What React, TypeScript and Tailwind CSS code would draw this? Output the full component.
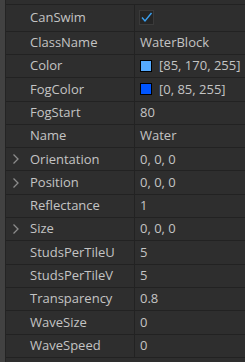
import React from "react";

type Row = { name: string; value: string; expand?: boolean; kind?: "check" | "color"; color?: string };

const rows: Row[] = [
  { name: "CanSwim", value: "", kind: "check" },
  { name: "ClassName", value: "WaterBlock" },
  { name: "Color", value: "[85, 170, 255]", kind: "color", color: "rgb(85,170,255)" },
  { name: "FogColor", value: "[0, 85, 255]", kind: "color", color: "rgb(0,85,255)" },
  { name: "FogStart", value: "80" },
  { name: "Name", value: "Water" },
  { name: "Orientation", value: "0, 0, 0", expand: true },
  { name: "Position", value: "0, 0, 0", expand: true },
  { name: "Reflectance", value: "1" },
  { name: "Size", value: "0, 0, 0", expand: true },
  { name: "StudsPerTileU", value: "5" },
  { name: "StudsPerTileV", value: "5" },
  { name: "Transparency", value: "0.8" },
  { name: "WaveSize", value: "0" },
  { name: "WaveSpeed", value: "0" },
];

function Chevron() {
  return (
    <svg width="8" height="12" viewBox="0 0 8 12" className="text-[#8c8c8c]">
      <path d="M1.5 1.5 L6 6 L1.5 10.5" fill="none" stroke="currentColor" strokeWidth="1.3" />
    </svg>
  );
}

export default function App() {
  return (
    <div
      className="w-[245px] h-[362px] flex bg-[#2e2e2e] overflow-hidden text-[13px] text-[#c4c4c4]"
      style={{ fontFamily: '"Open Sans", "Noto Sans", sans-serif' }}
    >
      <div className="w-[6px] h-full bg-[#424242] border-r border-[#242424]" />
      <div className="flex-1 flex flex-col">
        <div className="h-[5px] border-b border-[#222222]" />
        {rows.map((r, i) => (
          <div
            key={r.name}
            className={`flex border-b border-[#222222] ${i === 0 ? "h-[26.7px]" : "h-[23.3px]"}`}
          >
            <div className="w-[129px] flex items-center border-r border-[#222222]">
              <div className="w-[24px] flex items-center pl-[6px]">
                {r.expand ? <Chevron /> : null}
              </div>
              <span>{r.name}</span>
            </div>
            <div className="flex-1 flex items-center pl-[4px]">
              {r.kind === "check" ? (
                <div className="w-[15px] h-[15px] bg-[#252525] border border-[#3a3a3a] flex items-center justify-center">
                  <svg width="13" height="13" viewBox="0 0 13 13">
                    <path d="M2 6.5 L5 10 L11.5 2" fill="none" stroke="#3aa0f0" strokeWidth="1.4" />
                  </svg>
                </div>
              ) : r.kind === "color" ? (
                <div className="flex items-center gap-[7px] pl-[1px]">
                  <div className="w-[12px] h-[12px] border border-black" style={{ background: r.color }} />
                  <span>{r.value}</span>
                </div>
              ) : (
                <span className="pl-[1px]">{r.value}</span>
              )}
            </div>
          </div>
        ))}
        <div className="flex-1" />
      </div>
    </div>
  );
}
